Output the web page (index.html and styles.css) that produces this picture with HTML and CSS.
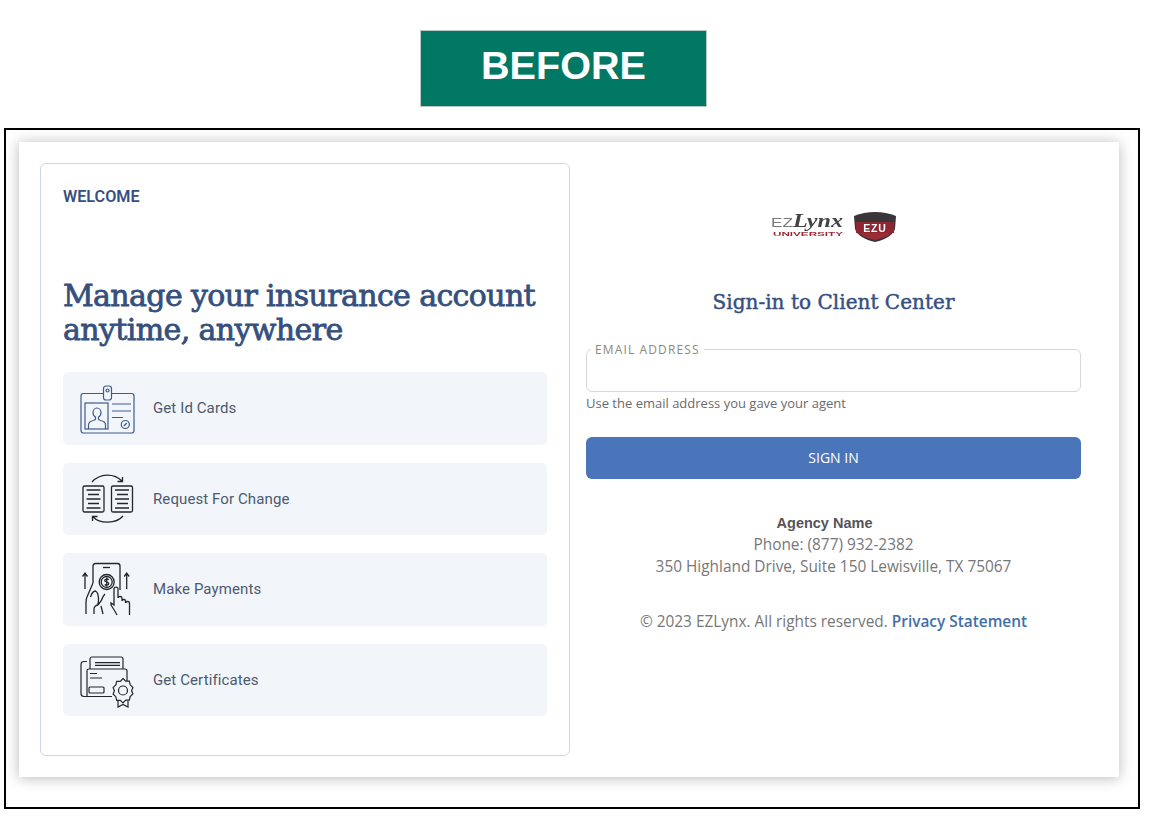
FILE: index.html
```html
<!DOCTYPE html>
<html lang="en">
<head>
<meta charset="utf-8">
<title>Sign-in to Client Center</title>
<link rel="stylesheet" href="styles.css">
</head>
<body>
<header class="banner">BEFORE</header>
<div class="frame">
  <main class="card">
    <section class="panel">
      <div class="welcome">WELCOME</div>
      <h1 class="headline">Manage your insurance account anytime, anywhere</h1>
      <ul class="features">
        <li class="feature">
          <svg class="ficon" viewBox="0 0 56 56" fill="none" stroke="#3f5b8c" stroke-width="1.200">
            <rect x="1" y="13.500" width="53" height="39.500" rx="2.500"/>
            <rect x="23.500" y="6" width="8" height="14" rx="2.500" fill="#f2f5fa"/>
            <circle cx="27.500" cy="10.500" r="1.500"/>
            <rect x="5" y="23" width="23" height="26"/>
            <path d="M8.500 49v-4c0-3 2.500-4 5-4.500l2-1v-2.500c-2-1-2.500-2.500-2.500-4.500 0-2.500 1.800-4.500 4-4.500s4 2 4 4.500c0 2-.5 3.500-2.500 4.500v2.500l2 1c2.500.5 5 1.500 5 4.500v4"/>
            <path d="M32 24h19M32 31h19M32 37.500h11"/>
            <circle cx="45.300" cy="44.500" r="4"/>
            <path d="M43.800 46l3-3"/>
          </svg>
          <span>Get Id Cards</span>
        </li>
        <li class="feature">
          <svg class="ficon" viewBox="0 0 56 56" fill="none" stroke="#23262b" stroke-width="1.300">
            <rect x="3" y="15" width="21" height="26" rx="1.500"/>
            <rect x="31.500" y="15" width="21" height="26" rx="1.500"/>
            <path d="M6.500 19h14M8 23.500h11M6.500 28h14M8 32.500h11M6.500 37h14M35 19h14M37 23.500h11M35 28h14M37 32.500h11M35 37h14"/>
            <path d="M12 11C20 2 34 2 42 10M37.500 10.500H42.500V6"/>
            <path d="M43 45c-7 8-23 8-30 1M17.500 45.500H12.500V50"/>
          </svg>
          <span>Request For Change</span>
        </li>
        <li class="feature">
          <svg class="ficon" viewBox="0 0 56 56" fill="none" stroke="#23262b" stroke-width="1.300">
            <path d="M13 22V5c0-1.500 1-2.500 2.500-2.500h22C39 2.500 40 3.500 40 5v24"/>
            <path d="M23 6.500h7"/>
            <circle cx="26.700" cy="21" r="7.500"/>
            <circle cx="26.700" cy="21" r="5.500"/>
            <path d="M28.700 18.700c-1-1-4-1-4 .8s4 1 4 3-3 2-4 1M26.700 16.500v9"/>
            <path d="M5 28V12.500M2.500 15.500L5 12l2.500 3.500M46.700 28V12.500M44.200 15.500L46.700 12l2.500 3.500"/>
            <path d="M13 22l-6 14c-1 2-1 3-1 5v12M10.500 36c1-3 3-6 5-6 2 1 3 5 3 9 0 2 0 3-1 5M18 44c-2 0-4 2-4 4v5M25 33c-2 2-3 5-4 7l-3 4M21 45l2 8"/>
            <path d="M37 54c-2-4-4-7-6-10v-2l3 2V28c0-2.500 4-2.500 4 0v9c0-2 4-2 4 0v3c0-2 3.500-2 3.500 0v2c0-2 4-2 4 0v12"/>
          </svg>
          <span>Make Payments</span>
        </li>
        <li class="feature">
          <svg class="ficon" viewBox="0 0 56 56" fill="none" stroke="#23262b" stroke-width="1.200">
            <path d="M7 9.500H4c-2 0-3 1-3 3v29c0 2 1 3 3 3h28"/>
            <path d="M10 17V7c0-1 1-2 2-2h29c1 0 2 1 2 2v10"/>
            <path d="M15 10.600h25M15 13.300h25"/>
            <path d="M7 44.500V19c0-1 1-2 2-2h36c1 0 2 1 2 2v10"/>
            <path d="M10 21.500h7M10 26h12"/>
            <rect x="9" y="35" width="15" height="6" rx="1"/>
            <path d="M43 26.500l2.700 2.700h3.600l.9 3.600 2.700 2.700-1.300 3.200 1.300 3.200-2.700 2.700-.9 3.600h-3.600L43 51l-2.700-2.700h-3.600l-.9-3.600-2.700-2.700 1.300-3.200-1.300-3.200 2.700-2.700.9-3.600h3.600z" fill="#f2f5fa"/>
            <circle cx="43" cy="38.500" r="4.500"/>
            <path d="M38 49v6l5-2.500 5 2.500v-6"/>
          </svg>
          <span>Get Certificates</span>
        </li>
      </ul>
    </section>
    <section class="signin">
      <svg class="logo" viewBox="0 0 126 32" role="img" aria-label="EZLynx University EZU">
        <text x="0" y="16" class="logo-ez" textLength="22" lengthAdjust="spacingAndGlyphs">EZ</text>
        <text x="22" y="16" class="logo-lynx" textLength="50" lengthAdjust="spacingAndGlyphs">Lynx</text>
        <text x="2" y="24.500" class="logo-uni" textLength="70" lengthAdjust="spacingAndGlyphs">UNIVERSITY</text>
        <path d="M83 5q10-4 21-4t21 4l-1 13q-3 9-20 13q-17-4-20-13z" fill="#3a3538"/>
        <path d="M85 11h38v8q-4 7-19 10q-15-3-19-10z" fill="#9c2b36"/>
        <rect x="85" y="11" width="38" height="11" fill="#8f2530"/>
        <text x="104" y="21" class="logo-ezu">EZU</text>
      </svg>
      <h2 class="title">Sign-in to Client Center</h2>
      <div class="field">
        <span class="field-label">EMAIL ADDRESS</span>
      </div>
      <p class="hint">Use the email address you gave your agent</p>
      <button class="btn" type="button">SIGN IN</button>
      <div class="agency">
        <div class="agency-name">Agency Name</div>
        <div>Phone: (877) 932-2382</div>
        <div>350 Highland Drive, Suite 150 Lewisville, TX 75067</div>
      </div>
      <p class="legal">© 2023 EZLynx. All rights reserved. <a class="link" href="#">Privacy Statement</a></p>
    </section>
  </main>
</div>
</body>
</html>
```

FILE: styles.css
```css
* { box-sizing: border-box; }
html, body { margin: 0; padding: 0; background: #fff; }
body { width: 1149px; height: 823px; overflow: hidden; padding: 30px 0 0 4px; font-family: "Open Sans", sans-serif; }

.banner {
  width: 287px; height: 77px; margin-left: 416px;
  background: #017864; border: 1px solid #b9c9c4;
  color: #fff; font: 700 39.600px/68px "Liberation Sans", Arial, sans-serif;
  text-align: center;
}
.frame {
  width: 1136px; height: 681px; margin-top: 21px;
  border: 2px solid #000; padding: 12px 0 0 13px;
}
.card {
  width: 1100px; height: 635px; background: #fff;
  box-shadow: 0 1px 13px rgba(0,0,0,.28);
  display: flex; padding: 21px 0 0 21px;
}
.panel {
  width: 530px; height: 593px; flex: none;
  border: 1px solid #cdd7ea; border-radius: 6px;
  padding: 24px 22px 0;
}
.welcome { font: 600 16.200px/18px Roboto, sans-serif; color: #35507e; }
.headline {
  margin: 73px -10px 25px 0;
  font: 400 30px/34px "DejaVu Serif", serif; letter-spacing: -.62px;
  -webkit-text-stroke: .8px #35507e;
  color: #35507e;
}
.features { list-style: none; margin: 0; padding: 0; display: flex; flex-direction: column; gap: 18px; }
.feature {
  height: 72.500px; background: #f2f5fa; border-radius: 5px;
  display: flex; align-items: center; gap: 17px; padding-left: 17px;
  font: 400 15px/18px Roboto, sans-serif; letter-spacing: .1px; color: #4c5a6e;
}
.ficon { width: 56px; height: 56px; flex: none; }

.signin { width: 495px; margin-left: 16px; flex: none; display: flex; flex-direction: column; text-align: center; }
.logo { width: 126px; height: 32px; margin: 48px auto 0; align-self: center; filter: blur(.7px); }
.logo-ez { font: 400 13px "Liberation Sans", sans-serif; fill: #7a7a7a; }
.logo-lynx { font: italic 700 19px "Liberation Serif", serif; fill: #444; }
.logo-uni { font: 700 6px "Liberation Sans", sans-serif; fill: #9c2b36; }
.logo-ezu { font: 700 10.500px "Liberation Sans", sans-serif; fill: #fff; text-anchor: middle; letter-spacing: .8px; }
.title { margin: 45px 0 0; font: 400 20px/28px "DejaVu Serif", serif; letter-spacing: .03px; -webkit-text-stroke: .45px #35507e; color: #35507e; }
.field {
  position: relative; height: 43px; margin-top: 33px;
  border: 1px solid #d8d8d8; border-radius: 6px;
}
.field-label {
  position: absolute; left: 4px; top: -7px; padding: 0 4px; background: #fff;
  font: 400 12px/14px "Open Sans", sans-serif; letter-spacing: 1.130px; color: #8a8a78;
}
.hint { margin: 2px 0 0; text-align: left; font: 400 13px/18px "Open Sans", sans-serif; color: #6b6b6b; }
.btn {
  height: 42px; margin-top: 25px; border: 0; border-radius: 6px;
  background: #4a75ba; color: #fff; font: 400 14px/20px "Open Sans", sans-serif;
}
.agency { margin-top: 34px; font: 400 15.400px/21.500px "Open Sans", sans-serif; color: #777; }
.agency-name { font: 700 14.500px/21px "Liberation Sans", sans-serif; color: #555; padding-right: 18px; }
.legal { margin: 35px 0 0; font: 400 15.400px/20px "Open Sans", sans-serif; color: #777; }
.link { color: #3f6fa8; font-weight: 600; text-decoration: none; }
```
